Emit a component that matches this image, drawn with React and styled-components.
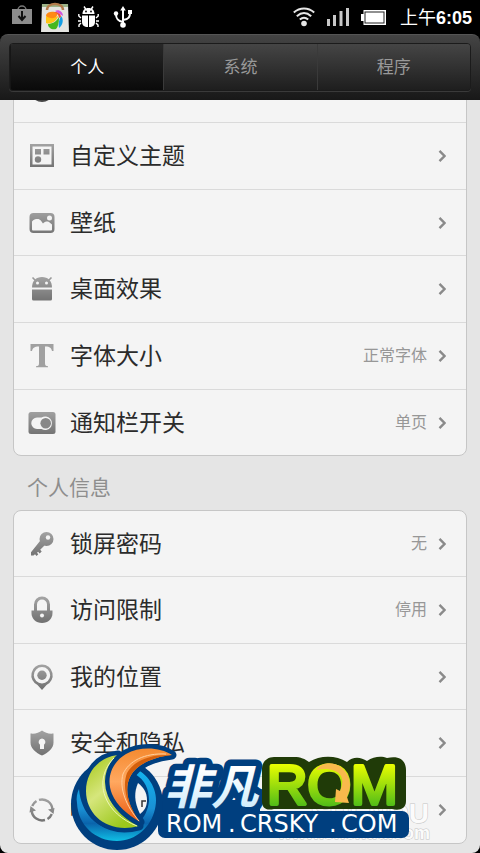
import styled, { createGlobalStyle, css } from 'styled-components';

const GlobalStyle = createGlobalStyle`
    * {
        box-sizing: border-box;
    }

    body {
        margin: 0;
        background: #000;
        font-family: "Noto Sans CJK SC", "Noto Sans", sans-serif;
    }

    button {
        margin: 0;
        padding: 0;
        border: 0;
        background: none;
        font: inherit;
        color: inherit;
        cursor: pointer;
    }
`;

const Screen = styled.div`
    position: relative;
    display: flex;
    flex-direction: column;
    height: 100vh;
    overflow: hidden;
    background: #000;
`;

const StatusBar = styled.header`
    display: flex;
    flex: none;
    justify-content: space-between;
    align-items: center;
    height: 34px;
    padding: 0 8px 0 12px;
    color: #fff;
`;

const StatusGroup = styled.div`
    display: flex;
    align-items: center;
    gap: ${props => props.$gap}px;
`;

const Clock = styled.time`
    margin-left: 2px;
    font-family: "Noto Sans CJK SC", sans-serif;
    font-size: 18px;
    line-height: 24px;
    white-space: nowrap;

    b {
        font-family: "Liberation Sans", sans-serif;
    }
`;

const TabBar = styled.nav`
    flex: none;
    height: 66px;
    padding: 8px 9px;
    border-top: 1px solid #555;
    border-radius: 8px 8px 0 0;
    background: linear-gradient(#444, #181818);
`;

const TabList = styled.div`
    display: grid;
    grid-template-columns: repeat(3, 1fr);
    height: 48px;
    overflow: hidden;
    border: 1px solid #1b1b1b;
    border-radius: 4px;
    box-shadow: 0 1px 0 #3a3a3a;
`;

const Tab = styled.button`
    && {
        padding-bottom: 2px;
        color: #999;
        font-size: 17px;
        line-height: 24px;
        background: linear-gradient(#454545, #1e1e1e);
        border-left: 1px solid #3a3a3a;
    }

    ${props => props.$active && css`
        && {
            color: #fff;
            background: linear-gradient(#282828, #0a0a0a);
            border-left-color: #161616;
        }
    `}
`;

const Content = styled.main`
    flex: 1;
    min-height: 0;
    overflow: hidden;
    padding: 0 13px;
    border-radius: 0 0 8px 8px;
    background: #e5e5e5;
`;

const Card = styled.ul`
    margin: 0;
    padding: 0;
    overflow: hidden;
    list-style: none;
    border: 1px solid #c6c6c6;
    border-radius: 8px;
    background: #f4f4f4;

    ${props => props.$scrolled && css`
        margin-top: -44px;
    `}
`;

const Item = styled.li`
    height: 67px;
    border-top: 1px solid #dadada;

    &:first-child {
        height: 65px;
        border-top: 0;
    }

    &:nth-child(3n) {
        height: 66px;
    }
`;

const RowButton = styled.button`
    display: flex;
    align-items: center;
    width: 100%;
    height: 100%;

    && {
        padding: 0 20px 0 14px;
        text-align: left;
    }
`;

const IconBox = styled.span`
    display: flex;
    flex: none;
    justify-content: center;
    width: 28px;
    margin-right: 14px;
`;

const Label = styled.span`
    flex: 1;
    padding-bottom: 4px;
    color: #2b2b2b;
    font-size: 23px;
    line-height: 32px;
    white-space: nowrap;
`;

const Value = styled.span`
    margin-right: 11px;
    padding-bottom: 4px;
    color: #979797;
    font-size: 16px;
    line-height: 24px;
`;

const SectionTitle = styled.h2`
    margin: 0;
    padding: 14px 0 8px 14px;
    color: #8e8e8e;
    font-size: 21px;
    font-weight: 400;
    line-height: 32px;
`;

const Watermark = styled.svg`
    position: absolute;
    bottom: 0;
    left: 66px;
    pointer-events: none;
`;

const Icon = ({children}) => (
    <svg width="28" height="28" viewBox="0 0 28 28" fill="url(#gray)" aria-hidden="true">
        <defs>
            <linearGradient id="gray" gradientUnits="userSpaceOnUse" x1="0" y1="2" x2="0" y2="26">
                <stop offset="0" stopColor="#a2a2a2" />
                <stop offset="1" stopColor="#727272" />
            </linearGradient>
        </defs>
        {children}
    </svg>
);

const icons = {
    dial: <circle cx="14" cy="14" r="12" fill="#444" />,
    theme: (
        <>
            <path fillRule="evenodd" d="M2 2h24v23H2zM4.500 4.500v18h19v-18z" />
            <path d="M7 7h6v5.500H7zM15.500 7h6v5.500h-6z" />
            <circle cx="10" cy="17.500" r="3.200" />
        </>
    ),
    wallpaper: (
        <>
            <rect x="1.500" y="4" width="25" height="20" rx="4" />
            <circle cx="21.500" cy="9" r="2.500" fill="#f4f4f4" />
            <path fill="#f4f4f4" d="M4 20.500v-8c1.500-2 3.500-2.500 5.500-2.500 3 0 4 2.500 5.500 4.500 2-2 4-2.500 6-1.500l3 2.500v5a1 1 0 0 1-1 1H5a1 1 0 0 1-1-1z" />
        </>
    ),
    android: (
        <>
            <path d="M4.500 2.500 8 6M23.500 2.500 20 6" fill="none" stroke="#999" strokeWidth="1.600" />
            <path d="M4 12.500C4 6 8 2 14 2s10 4 10 10.500z" />
            <circle cx="9.500" cy="8" r="1.500" fill="#f4f4f4" />
            <circle cx="18.500" cy="8" r="1.500" fill="#f4f4f4" />
            <path d="M4 14.500h20v9.500a1.500 1.500 0 0 1-1.500 1.500h-17A1.500 1.500 0 0 1 4 24z" />
        </>
    ),
    font: <path fill="#a0a0a0" d="M2.500 2h23v7H24c-.7-3-2-4.500-6.500-4.500H17V21c0 2.500.7 3 3 3.200v1H8v-1c2.500-.2 3-.7 3-3.200V4.500C6 4.500 4.700 6 4 9H2.500z" />,
    toggle: (
        <>
            <rect x="0.500" y="3" width="27" height="22" rx="2.500" />
            <path fill="#f4f4f4" d="M9 8.500h4.500a6.800 6.800 0 1 1 0 11.500H9a5.700 5.700 0 0 1 0-11.500z" />
            <circle cx="17.700" cy="14.200" r="5.300" fill="#888" />
        </>
    ),
    key: (
        <>
            <circle cx="18.500" cy="9" r="7" />
            <circle cx="20" cy="7.500" r="2.200" fill="#f4f4f4" />
            <path d="m12 11 4.500 4.500-4.300 4.300 1.500 1.600-2 2-1.600-1.700-1.100 1.100 1.300 1.400-1.700 1.700-1.600-1.700-1.500 1.300H3v-3.200z" />
        </>
    ),
    lock: (
        <>
            <path d="M7.500 16V8.500a6.500 6.500 0 0 1 13 0V16" fill="none" stroke="url(#gray)" strokeWidth="3" />
            <path d="M3.500 14.500h21v2.500c0 6-4.500 10-10.500 10S3.500 23 3.500 17z" />
            <circle cx="14" cy="19.500" r="2" fill="#f4f4f4" />
        </>
    ),
    location: (
        <>
            <path fillRule="evenodd" d="M14 1.500a10.700 10.700 0 0 1 4.500 20.400L14 27l-4.500-5.100A10.700 10.700 0 0 1 14 1.500zm0 2.500a8.200 8.200 0 1 0 0 16.400A8.200 8.200 0 0 0 14 4z" />
            <circle cx="14" cy="12.200" r="4.700" />
        </>
    ),
    shield: (
        <>
            <path d="M14 1.500C11 4 7 5 2.500 4.500v9c0 6 5.500 10.500 11.500 13 6-2.500 11.500-7 11.500-13v-9C21 5 17 4 14 1.500z" />
            <path fill="#f4f4f4" d="M14 9.500a3.500 3.500 0 0 1 2 6.300V20h-4v-4.200a3.500 3.500 0 0 1 2-6.300z" />
        </>
    ),
    sync: (
        <>
            <g fill="none" stroke="url(#gray)" strokeWidth="2.400">
                <path d="M11 3.900a10.500 10.500 0 0 1 13.400 9.100" />
                <path d="M23.800 18a10.500 10.500 0 0 1-4.300 5" />
                <path d="M17 24a10.500 10.500 0 0 1-13.300-9" />
                <path d="M4.200 10a10.500 10.500 0 0 1 4.300-5" />
            </g>
            <path d="M20 13.500 26.500 12 25.500 18zM8 14.500 1.500 16.500 2.500 10z" />
        </>
    ),
};

const Chevron = () => (
    <svg width="8" height="14" viewBox="0 0 8 14" aria-hidden="true">
        <path d="m1.500 1.800 5 5.200-5 5.200" fill="none" stroke="#8a8a8a" strokeWidth="2.400" />
    </svg>
);

const Row = ({icon, label, value}) => (
    <Item>
        <RowButton type="button">
            <IconBox><Icon>{icons[icon]}</Icon></IconBox>
            <Label>{label}</Label>
            {value && <Value>{value}</Value>}
            <Chevron />
        </RowButton>
    </Item>
);

const NotificationIcons = () => (
    <StatusGroup $gap={9} aria-hidden="true">
        <svg width="20" height="24" viewBox="0 0 20 24">
            <path d="M6 5a4 4 0 0 1 8 0" fill="none" stroke="#777" strokeWidth="1.500" />
            <path d="M0 4h20v15H0z" fill="#8d8d8d" />
            <path d="M10 6v8M6.500 11l3.500 4 3.500-4" fill="none" stroke="#111" strokeWidth="2" />
        </svg>
        <svg width="28" height="30" viewBox="0 0 28 30">
            <path d="M1 2h26l1 28H0z" fill="#e4e4e0" />
            <path d="M1 2h26v3H1z" fill="#9bb287" />
            <path d="M6 8C6 0 22 0 22 8" fill="none" stroke="#b27b4b" strokeWidth="2.500" />
            <path d="M14 18C7 18 5 15 5 13c2-4 7-4 12-2z" fill="#ff8a14" />
            <path d="M5 14c4 3 9 3 13-1-3 7-9 10-13 8z" fill="#ffc414" />
            <path d="M14 9c4-2 8 1 8 5-3-2-5-3-8-5z" fill="#d054df" />
            <path d="M20 14c3 3 2 9-2 12-1-4 0-8 2-12z" fill="#159ee4" />
            <path d="M18 15c0 6-1 10-3 12-4 1-8-1-8-5 4 0 8-2 11-7z" fill="#45b71c" />
            <path d="M13 10c4 0 7 2 7 5l-2 1c0-3-2-5-5-6z" fill="#f14c3c" />
        </svg>
        <svg width="21" height="22" viewBox="0 0 21 22" fill="#fff">
            <path d="M4.500 8C4.500 4 7 2 10.500 2s6 2 6 6zM4 9.500h6v11.500C6 21 4 19 4 16zM11 9.500h6V16c0 3-2 5-6 5z" />
            <path d="m6 .5 2 3M15 .5l-2 3M3 12 .8 10V8M3 15H0M3 17l-2 2v2M18 12l2.200-2V8M18 15h3M18 17l2 2v2" fill="none" stroke="#fff" strokeWidth="1.400" />
            <circle cx="8" cy="5.500" r="0.900" fill="#000" />
            <circle cx="13" cy="5.500" r="0.900" fill="#000" />
        </svg>
        <svg width="30" height="22" viewBox="0 0 30 22" fill="#fff">
            <path d="M15 3v16M15 16c-6-1-7-4-7-8M15 14c6-1 7-3 7-7" fill="none" stroke="#fff" strokeWidth="2" />
            <path d="m15 0 2.800 4.500h-5.600zM20 4h4v4h-4z" />
            <circle cx="8" cy="7.500" r="2.200" />
            <circle cx="15" cy="19" r="2.800" />
        </svg>
    </StatusGroup>
);

const SystemIcons = () => (
    <StatusGroup $gap={12} aria-hidden="true">
        <svg width="22" height="20" viewBox="0 0 22 20" fill="none" stroke="#e6e6e6" strokeWidth="2">
            <path d="M.8 5.500c6-5.300 14.400-5.300 20.400 0M3.800 9.200c4.500-4 9.900-4 14.400 0M6.800 12.500c2.700-2.300 5.700-2.300 8.400 0" />
            <circle cx="11" cy="16.500" r="2.800" fill="#e6e6e6" stroke="none" />
        </svg>
        <svg width="22" height="20" viewBox="0 0 22 20" fill="#c8c8c8">
            <path d="M0 12h3v7H0zM6 8h3v11H6zM12.500 4h3v15h-3zM19 1h3v18h-3z" />
        </svg>
        <svg width="25" height="15" viewBox="0 0 25 15">
            <path d="M2.500 0H25v15H2.500v-4H0V4h2.500z" fill="#fff" />
            <rect x="4" y="2" width="19" height="11" stroke="#222" fill="#fff" />
        </svg>
        <Clock>上午<b>6:05</b></Clock>
    </StatusGroup>
);

const Logo = () => (
    <Watermark width="370" height="117" viewBox="66 736 370 117" aria-label="ROM.CRSKY.COM">
        <defs>
            <linearGradient id="ice" x1="0" y1="0" x2="0" y2="1">
                <stop offset="0.3" stopColor="#fff" />
                <stop offset="1" stopColor="#c3e8fc" />
            </linearGradient>
            <linearGradient id="lime" gradientUnits="userSpaceOnUse" x1="0" y1="764" x2="0" y2="807">
                <stop offset="0" stopColor="#eaff00" />
                <stop offset="1" stopColor="#4dbb18" />
            </linearGradient>
            <linearGradient id="leaf" x1="0" y1="0" x2="0.6" y2="1">
                <stop offset="0" stopColor="#a4c614" />
                <stop offset="0.5" stopColor="#d6e67c" />
                <stop offset="1" stopColor="#9cc81c" />
            </linearGradient>
            <linearGradient id="flame" x1="0" y1="0" x2="0" y2="1">
                <stop offset="0" stopColor="#f58a30" />
                <stop offset="0.45" stopColor="#ffa860" />
                <stop offset="1" stopColor="#ea5a10" />
            </linearGradient>
            <linearGradient id="water" gradientUnits="userSpaceOnUse" x1="0" y1="768" x2="0" y2="842">
                <stop offset="0" stopColor="#12b4f0" />
                <stop offset="0.55" stopColor="#1a90d4" />
                <stop offset="0.75" stopColor="#0a64ac" />
                <stop offset="1" stopColor="#10c4e8" />
            </linearGradient>
        </defs>

        <g fontFamily="Liberation Sans, sans-serif" fill="#fbfbfb" stroke="#c4c4c4" paintOrder="stroke" textAnchor="end">
            <text x="429" y="823" fontSize="28" fontWeight="700">SHENDU</text>
            <text x="430" y="839" fontSize="18" fontWeight="700">www.shendu.com</text>
        </g>

        <path fill="#003f7f" d="M160 800h100v36H160z" />
        <rect x="158" y="811" width="251" height="27" rx="7" fill="#003f7f" />

        <circle cx="117" cy="804" r="46" fill="#003f7f" />
        <path d="M138 770c14 8 21 24 17 39-4 18-19 32-38 32-22 0-39-16-40-38-1-5 0-10 2-14 2 24 18 41 40 41 16 0 28-11 30-29 0-12-4-21-14-27z" fill="url(#water)" />
        <g stroke="#003f7f" strokeWidth="9" strokeLinejoin="round" paintOrder="stroke">
            <path d="M118 755c-19 2-32 17-32 36 0 25 23 43 53 35-18-8-31-23-33-41-1-12 4-22 12-30z" fill="url(#leaf)" />
            <path d="M172 755c-12-8-32-9-46-1-15 9-20 25-14 40 5 12 15 20 28 28-12-16-16-33-10-45 6-12 22-20 42-22z" fill="url(#flame)" />
        </g>
        <path d="M138 783c-4 9-4 19 2 31 4-3 7-7 7-14 0-8-4-13-9-17z" fill="#f4f4f4" />
        <path d="M142 807v-6h4" fill="none" stroke="#333" strokeWidth="1.500" />
        <path d="M114 758c-10 10-14 24-9 38 5 14 17 24 32 30" fill="none" stroke="#eff6b8" strokeWidth="1" />
        <path d="M172 755c-23-1-38 6-45 18-5 13-1 32 13 49-12-16-16-33-10-45 6-12 22-20 42-22z" fill="#d4600c" />
        <path d="M166 754c-22-1-37 7-43 20-4 14 3 32 16 47" fill="none" stroke="#ffd0a0" />

        <text
            x="164" y="804" fontFamily="Noto Sans CJK SC, sans-serif" fontSize="47" fontWeight="700" fontStyle="italic"
            fill="url(#ice)" stroke="#003f7f" strokeWidth="13" strokeLinejoin="round" paintOrder="stroke"
        >
            非凡
        </text>

        <path
            d="M262 769c0-7 5-12 12-12h20c7 0 11 2 15 5 11-7 27-7 38 0 6-6 14-5 20-1 7-5 15-5 20-3 13-3 19 3 19 12v31c0 8-7 10-14 8h-118c-8 2-12-1-12-8z"
            fill="#203b08"
        />
        <text
            x="267" y="804" fontFamily="Liberation Sans, sans-serif" fontSize="56"
            fill="url(#lime)" stroke="url(#lime)" strokeWidth="4" strokeLinejoin="round"
        >
            ROM
        </text>
        <path d="M316 770c5-8 18-9 26-2 9 8 10 19 5 29l2 6-14-1 1-13 4 2c4-9 3-17-5-20-7-3-13-2-19-1z" fill="#f8b94c" />

        <g fontFamily="DejaVu Sans, sans-serif" fontSize="24" fill="#fff">
            <text x="166" y="832">ROM</text>
            <text x="228" y="832">.</text>
            <text x="240" y="832">CRSKY</text>
            <text x="329" y="832">.</text>
            <text x="341" y="832">COM</text>
        </g>
    </Watermark>
);

const App = () => (
    <Screen>
        <GlobalStyle />
        <StatusBar>
            <NotificationIcons />
            <SystemIcons />
        </StatusBar>
        <TabBar>
            <TabList role="tablist">
                <Tab type="button" role="tab" aria-selected="true" $active>个人</Tab>
                <Tab type="button" role="tab" aria-selected="false">系统</Tab>
                <Tab type="button" role="tab" aria-selected="false">程序</Tab>
            </TabList>
        </TabBar>
        <Content>
            <Card $scrolled>
                <Row icon="dial" />
                <Row icon="theme" label="自定义主题" />
                <Row icon="wallpaper" label="壁纸" />
                <Row icon="android" label="桌面效果" />
                <Row icon="font" label="字体大小" value="正常字体" />
                <Row icon="toggle" label="通知栏开关" value="单页" />
            </Card>
            <SectionTitle>个人信息</SectionTitle>
            <Card>
                <Row icon="key" label="锁屏密码" value="无" />
                <Row icon="lock" label="访问限制" value="停用" />
                <Row icon="location" label="我的位置" />
                <Row icon="shield" label="安全和隐私" />
                <Row icon="sync" label="帐号与同步" />
            </Card>
        </Content>
        <Logo />
    </Screen>
);

export default App;
